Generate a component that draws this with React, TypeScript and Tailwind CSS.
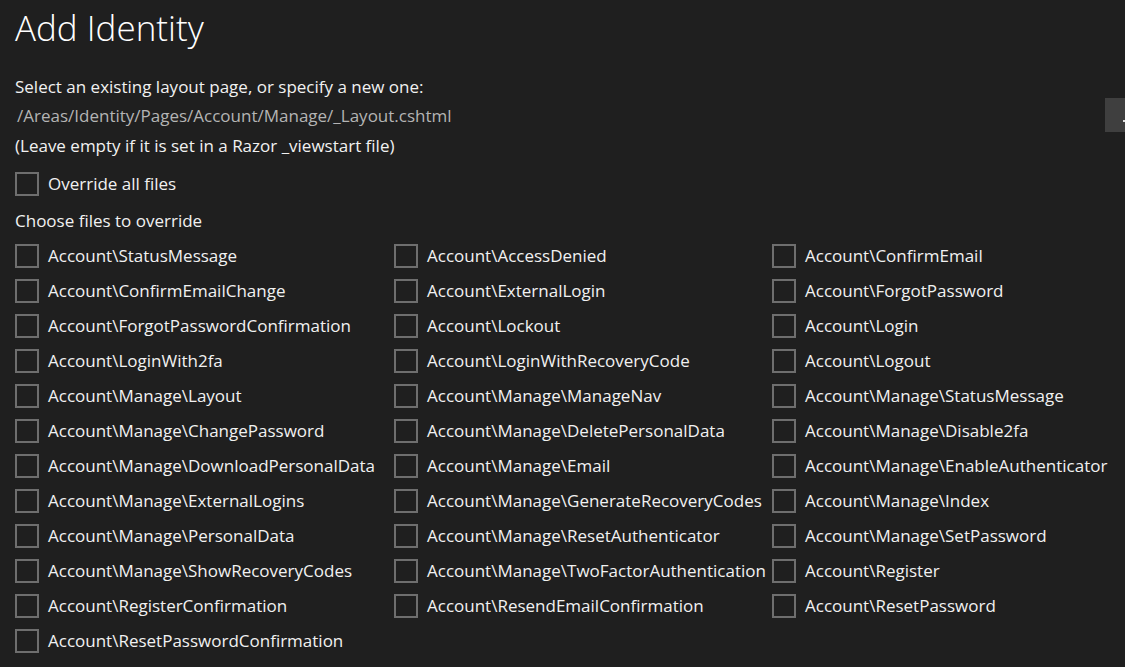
import React from "react";

const files: string[] = [
  "Account\\StatusMessage", "Account\\AccessDenied", "Account\\ConfirmEmail",
  "Account\\ConfirmEmailChange", "Account\\ExternalLogin", "Account\\ForgotPassword",
  "Account\\ForgotPasswordConfirmation", "Account\\Lockout", "Account\\Login",
  "Account\\LoginWith2fa", "Account\\LoginWithRecoveryCode", "Account\\Logout",
  "Account\\Manage\\Layout", "Account\\Manage\\ManageNav", "Account\\Manage\\StatusMessage",
  "Account\\Manage\\ChangePassword", "Account\\Manage\\DeletePersonalData", "Account\\Manage\\Disable2fa",
  "Account\\Manage\\DownloadPersonalData", "Account\\Manage\\Email", "Account\\Manage\\EnableAuthenticator",
  "Account\\Manage\\ExternalLogins", "Account\\Manage\\GenerateRecoveryCodes", "Account\\Manage\\Index",
  "Account\\Manage\\PersonalData", "Account\\Manage\\ResetAuthenticator", "Account\\Manage\\SetPassword",
  "Account\\Manage\\ShowRecoveryCodes", "Account\\Manage\\TwoFactorAuthentication", "Account\\Register",
  "Account\\RegisterConfirmation", "Account\\ResendEmailConfirmation", "Account\\ResetPassword",
  "Account\\ResetPasswordConfirmation",
];

function Check({ label }: { label: string }) {
  return (
    <div className="flex items-center h-[35px] gap-[9px] whitespace-nowrap">
      <div className="w-6 h-6 border-2 border-[#6e6e6e] shrink-0" />
      <span>{label}</span>
    </div>
  );
}

export default function App() {
  return (
    <div
      className="w-[1125px] h-[667px] overflow-hidden bg-[#1f1f1f] text-[#f1f1f1] text-[17px] relative"
      style={{ fontFamily: '"Open Sans", "Noto Sans", sans-serif' }}
    >
      <div className="px-[15px]">
        <h1 className="text-[35px] font-light leading-[56px] text-white">Add Identity</h1>
        <div className="mt-[16px] leading-[30px]">Select an existing layout page, or specify a new one:</div>
        <div className="flex h-[30px]">
          <div className="flex-1 text-[#b4b4b4] pl-[2px] leading-[28px]">/Areas/Identity/Pages/Account/Manage/_Layout.cshtml</div>
          <div className="w-[20px] h-[34px] -mt-[4px] bg-[#3f3f3f] mr-[-15px] relative shrink-0">
            <div className="absolute right-0 top-[22px] w-[2px] h-[2px] bg-[#e0e0e0]" />
          </div>
        </div>
        <div className="-mt-[1px] leading-[30px]">(Leave empty if it is set in a Razor _viewstart file)</div>
        <div className="mt-[5px]">
          <Check label="Override all files" />
        </div>
        <div className="mt-[2px] leading-[35px]">Choose files to override</div>
        <div className="grid grid-cols-[379px_378px_1fr]">
          {files.map((f) => (
            <Check key={f} label={f} />
          ))}
        </div>
      </div>
    </div>
  );
}
